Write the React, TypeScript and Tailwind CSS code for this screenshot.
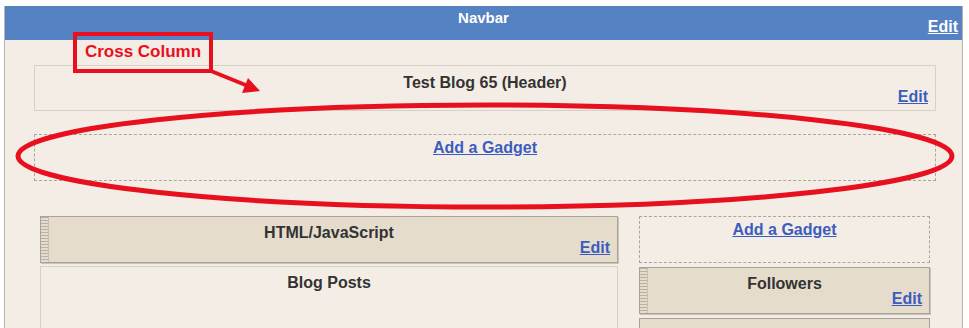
// Blogger layout editor screenshot with "Cross Column" annotation

import React from 'react';

const EditLink: React.FC<{ className?: string }> = ({ className = '' }) => (
  <a className={`font-bold text-[16px] leading-none underline text-[#3b5dbf] ${className}`}>Edit</a>
);

const Widget: React.FC<{ title: string; className?: string }> = ({ title, className = '' }) => (
  <div className={`relative flex justify-center h-[47px] bg-[#e5dccb] border border-[#a9a39b] shadow-[1px_1px_0_#c9c2b8] pt-[4px] ${className}`}>
    {/* drag grip */}
    <div className="absolute left-0 top-0 bottom-0 w-[8px] border-r border-[#c8c0b2] bg-[repeating-linear-gradient(to_bottom,#b8b0a4_0px,#b8b0a4_1px,transparent_1px,transparent_3px)]" />
    <span className="font-bold text-[16px] text-[#333]">{title}</span>
    <EditLink className="absolute right-[7px] bottom-[6px]" />
  </div>
);

const AddGadget: React.FC<{ className?: string }> = ({ className = '' }) => (
  <div className={`flex justify-center border border-dashed border-[#aaa59e] ${className}`}>
    <a className="font-bold text-[16px] underline text-[#3b5dbf]">Add a Gadget</a>
  </div>
);

export default function App() {
  return (
    <div className="relative w-[969px] h-[328px] overflow-hidden bg-white font-['Liberation_Sans',Arial,sans-serif]">
      <div className="ml-[4px] mt-[6px] w-[959px] h-[322px] border-x border-[#b9b4ad] bg-[#f4ede5]">
        {/* navbar */}
        <div className="relative h-[34px] bg-[#5482c2] flex justify-center">
          <span className="text-white font-bold text-[15px] pt-[1px]">Navbar</span>
          <a className="absolute right-[4px] bottom-[5px] text-white font-bold text-[16px] leading-none underline">Edit</a>
        </div>

        {/* header */}
        <div className="relative mt-[25px] ml-[29px] w-[902px] h-[46px] border border-[#d6d0c6] flex justify-center">
          <span className="font-bold text-[16px] text-[#333] pt-[5px]">Test Blog 65 (Header)</span>
          <EditLink className="absolute right-[7px] bottom-[5px]" />
        </div>

        {/* cross column gadget */}
        <AddGadget className="mt-[23px] ml-[29px] w-[902px] h-[47px] pt-[1px]" />

        {/* columns */}
        <div className="mt-[35px] ml-[35px] flex gap-[21px]">
          <div className="w-[578px] flex flex-col gap-[3px]">
            <Widget title="HTML/JavaScript" />
            <div className="h-[70px] border border-[#d6d0c6] flex justify-center pt-[4px]">
              <span className="font-bold text-[16px] text-[#333]">Blog Posts</span>
            </div>
          </div>
          <div className="w-[291px] flex flex-col gap-[4px]">
            <AddGadget className="h-[47px] pt-[1px]" />
            <Widget title="Followers" />
            <div className="h-[20px] border border-[#a9a39b] bg-[#e5dccb]" />
          </div>
        </div>
      </div>

      {/* annotation label */}
      <div className="absolute left-[73px] top-[32px] w-[140px] h-[41px] border-[4px] border-[#e8101e] flex items-start justify-center pt-[3px]">
        <span className="text-[#e8101e] font-bold text-[17px]">Cross Column</span>
      </div>

      {/* arrow + ellipse */}
      <svg className="absolute left-0 top-0 pointer-events-none" width="969" height="328">
        <line x1="211" y1="71" x2="248" y2="86" stroke="#e8101e" strokeWidth="4" />
        <polygon points="260,91 242,93 248,78" fill="#e8101e" />
        <ellipse cx="485" cy="156" rx="467" ry="51" fill="none" stroke="#e8101e" strokeWidth="5" />
      </svg>
    </div>
  );
}
